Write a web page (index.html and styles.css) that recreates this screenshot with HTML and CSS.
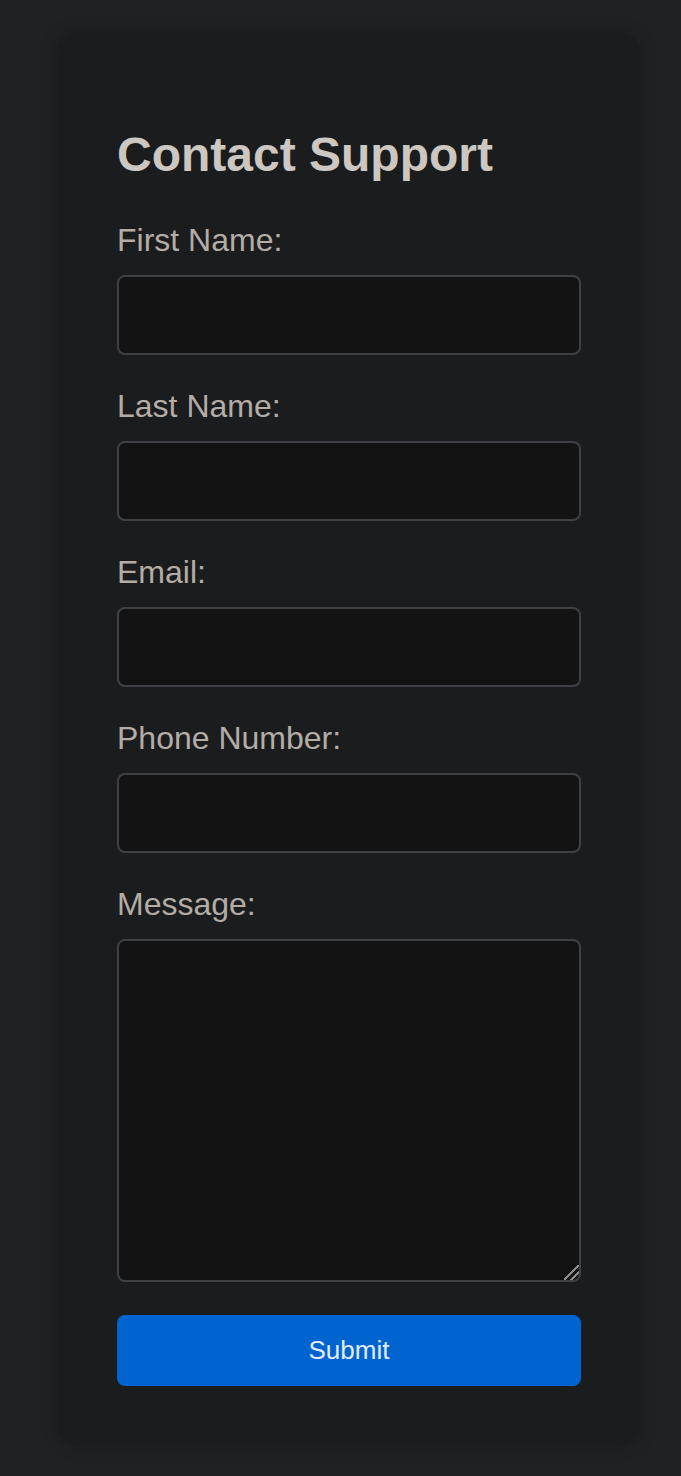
FILE: index.html
```html
<!DOCTYPE html>
<html lang="en">
<head>
<meta charset="utf-8">
<title>Contact Support</title>
<link rel="stylesheet" href="styles.css">
</head>
<body>
<main class="card">
  <h1 class="title">Contact Support</h1>
  <form class="form">
    <div class="field">
      <label class="label" for="first">First Name:</label>
      <input class="input" id="first" type="text">
    </div>
    <div class="field">
      <label class="label" for="last">Last Name:</label>
      <input class="input" id="last" type="text">
    </div>
    <div class="field">
      <label class="label" for="email">Email:</label>
      <input class="input" id="email" type="email">
    </div>
    <div class="field">
      <label class="label" for="phone">Phone Number:</label>
      <input class="input" id="phone" type="tel">
    </div>
    <div class="field">
      <label class="label" for="msg">Message:</label>
      <textarea class="input textarea" id="msg"></textarea>
    </div>
    <button class="submit" type="button">Submit</button>
  </form>
</main>
</body>
</html>
```
FILE: styles.css
```css
html, body {
  margin: 0;
  padding: 0;
  background: #202124;
}
body {
  padding: 33px 0 31px 57px;
  font-family: "Liberation Sans", Arial, sans-serif;
}
.card {
  box-sizing: border-box;
  width: 583px;
  padding: 60px 59px 59px 60px;
  background: #1b1c1e;
  border-radius: 20px;
  box-shadow: 0 0 18px rgba(0, 0, 0, 0.18);
}
.title {
  margin: 0 0 37px 0;
  padding-top: 33px;
  font-size: 48px;
  line-height: 57.6px;
  font-weight: 700;
  color: #ccc7c1;
}
.form {
  display: flex;
  flex-direction: column;
}
.field {
  display: flex;
  flex-direction: column;
  margin-bottom: 32px;
}
.field:last-of-type {
  margin-bottom: 33px;
}
.label {
  font-size: 32px;
  line-height: 38px;
  color: #b3ada6;
  margin-bottom: 16px;
}
.input {
  box-sizing: border-box;
  width: 464px;
  height: 80px;
  margin: 0;
  background: #131313;
  border: 2px solid #3e4043;
  border-radius: 8px;
  color: #ccc7c1;
  font-family: inherit;
  font-size: 24px;
  padding: 10px 14px;
  outline: none;
}
.textarea {
  height: 343px;
  resize: both;
}
.textarea::-webkit-resizer {
  background: linear-gradient(135deg,
    transparent 0 45%,
    #8a8a8a 45% 55%,
    transparent 55% 68%,
    #8a8a8a 68% 78%,
    transparent 78% 100%);
}
.submit {
  box-sizing: border-box;
  width: 464px;
  height: 71px;
  margin: 0;
  border: none;
  border-radius: 8px;
  background: #0064d0;
  color: #e3ebf3;
  font-family: inherit;
  font-size: 26px;
  cursor: pointer;
}
```
